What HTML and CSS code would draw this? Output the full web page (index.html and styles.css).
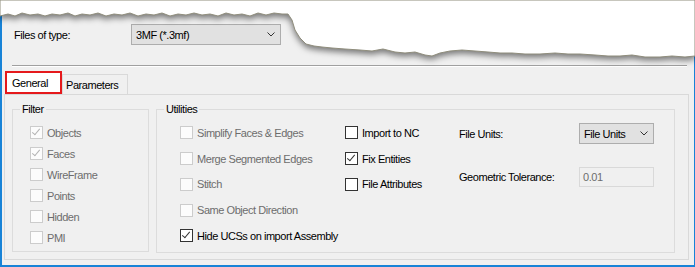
FILE: index.html
```html
<!DOCTYPE html>
<html lang="en">
<head>
    <meta charset="UTF-8">
    <title>Import Options</title>
    <link rel="stylesheet" href="styles.css">
</head>
<body>
    <div class="dialog">
        <div class="type-row">
            <span class="type-label">Files of type:</span>
            <div class="combo type-combo">
                <span>3MF (*.3mf)</span>
                <svg class="chevron" width="8" height="5" viewBox="0 0 8 5"><polyline points="0.5,0.5 4,4 7.5,0.5" fill="none" stroke="#333" stroke-width="1"/></svg>
            </div>
        </div>
        <div class="separator"></div>

        <div class="tabs">
            <div class="tab active">General</div>
            <div class="tab">Parameters</div>
        </div>

        <div class="panel">
            <div class="group filter">
                <span class="group-title">Filter</span>
                <div class="rows filter-rows">
                    <div class="check disabled checked"><span class="box"></span>Objects</div>
                    <div class="check disabled checked"><span class="box"></span>Faces</div>
                    <div class="check disabled"><span class="box"></span>WireFrame</div>
                    <div class="check disabled"><span class="box"></span>Points</div>
                    <div class="check disabled"><span class="box"></span>Hidden</div>
                    <div class="check disabled"><span class="box"></span>PMI</div>
                </div>
            </div>

            <div class="group utilities">
                <span class="group-title">Utilities</span>
                <div class="util-body">
                    <div class="rows util-col first-col">
                        <div class="check disabled"><span class="box"></span>Simplify Faces &amp; Edges</div>
                        <div class="check disabled"><span class="box"></span>Merge Segmented Edges</div>
                        <div class="check disabled"><span class="box"></span>Stitch</div>
                        <div class="check disabled"><span class="box"></span>Same Object Direction</div>
                        <div class="check checked"><span class="box"></span>Hide UCSs on import Assembly</div>
                    </div>
                    <div class="rows util-col second-col">
                        <div class="check"><span class="box"></span>Import to NC</div>
                        <div class="check checked"><span class="box"></span>Fix Entities</div>
                        <div class="check"><span class="box"></span>File Attributes</div>
                    </div>
                    <div class="settings">
                        <span class="setting-label">File Units:</span>
                        <div class="combo units-combo">
                            <span>File Units</span>
                            <svg class="chevron" width="8" height="5" viewBox="0 0 8 5"><polyline points="0.5,0.5 4,4 7.5,0.5" fill="none" stroke="#333" stroke-width="1"/></svg>
                        </div>
                        <span class="setting-label">Geometric Tolerance:</span>
                        <div class="text-field">0.01</div>
                    </div>
                </div>
            </div>
        </div>
    </div>

    <!-- torn top edge of the screenshot -->
    <svg class="torn" width="695" height="75" viewBox="0 0 695 75">
        <path class="torn-paper" d="M0,0 L695,0 L695,56 L685,57 L672,56 L660,57 L645,57 L632,55 L620,56 L608,56 L595,55 L580,54 L568,54 L555,53 L540,54 L525,54 L512,53 L500,53 L488,52 L475,51 L462,50 L450,51 L440,53 L432,56 L425,55 L415,52 L405,53 L395,52 L383,49 L372,51 L360,50 L345,49 L332,48 L322,47 L314,46 L306,44 L300,38 L295,30 L292,20 L288,14 L282,14 L274,13 L266,15 L258,13 L250,16 L242,14 L234,15 L226,13 L218,16 L210,14 L202,15 L194,13 L186,15 L178,14 L170,16 L162,13 L154,15 L146,14 L138,16 L130,13 L122,15 L114,14 L106,16 L98,13 L90,15 L82,14 L75,16 L68,13 L60,15 L52,14 L45,16 L38,14 L30,15 L22,13 L15,16 L8,14 L0,16 Z"/>
    </svg>
</body>
</html>
```

FILE: styles.css
```css
* { box-sizing: border-box; }
body {
    margin: 0;
    width: 695px;
    height: 267px;
    background: #ffffff;
    font-family: 'Liberation Sans', Arial, sans-serif;
    font-size: 11px;
    letter-spacing: -0.45px;
    color: #000;
    overflow: hidden;
    position: relative;
}
.dialog {
    width: 695px;
    height: 267px;
    background: #f0f0f0;
    border-left: 2px solid #1883d7;
    border-right: 1px solid #1883d7;
    border-bottom: 2px solid #1883d7;
}
.type-row {
    display: flex;
    align-items: center;
    padding: 24px 0 0 12px;
    height: 45px;
}
.type-label { width: 117px; }
.combo {
    display: flex;
    align-items: center;
    justify-content: space-between;
    background: #e1e1e1;
    border: 1px solid #adadad;
    padding: 0 5px 0 4px;
}
.type-combo { width: 150px; height: 21px; }
.chevron { display: block; }
.separator {
    margin: 20px 7px 0 10px;
    border-top: 1px solid #a0a0a0;
    border-bottom: 1px solid #ffffff;
}
.tabs {
    display: flex;
    align-items: flex-end;
    height: 23px;
    margin-top: 4px;
    padding-left: 3px;
}
.tab {
    width: 66px;
    height: 20px;
    padding: 0 3px;
    display: flex;
    align-items: center;
    border: 1px solid #d9d9d9;
    border-bottom: none;
    background: #f0f0f0;
}
.tab.active {
    height: 23px;
    padding: 0 5px;
    width: 57px;
    background: #ffffff;
    border: 2px solid #e5191c;
    position: relative;
    z-index: 1;
}
.panel {
    display: flex;
    gap: 7px;
    width: 685px;
    height: 166px;
    margin-left: 2px;
    border: 1px solid #d9d9d9;
    padding: 14px 0 0 7px;
}
.group {
    border: 1px solid #dcdcdc;
    height: 143px;
}
.filter { width: 137px; }
.utilities { width: 519px; height: 144px; }
.group-title {
    display: block;
    width: fit-content;
    margin: -7px 0 0 7px;
    padding: 0 2px;
    line-height: 13px;
    background: #f0f0f0;
}
.rows { display: flex; flex-direction: column; }
.filter-rows { padding: 6px 0 0 17px; }
.filter-rows .check { height: 21px; }
.util-body { display: flex; padding-top: 4px; }
.util-col .check { height: 25.75px; }
.first-col { width: 188px; padding-left: 23px; }
.second-col { width: 114px; }
.check {
    display: flex;
    align-items: center;
    gap: 4px;
    white-space: nowrap;
}
.box {
    width: 13px;
    height: 13px;
    border: 1px solid #333333;
    background: #ffffff;
    position: relative;
    flex: none;
}
.check.checked .box::after {
    content: "";
    position: absolute;
    left: 3px;
    top: 0px;
    width: 3px;
    height: 7px;
    border-right: 1.5px solid #333;
    border-bottom: 1.5px solid #333;
    transform: rotate(40deg);
}
.check.disabled { color: #6d6d6d; }
.check.disabled .box { border-color: #cccccc; background: #fcfcfc; }
.check.disabled.checked .box::after { border-color: #b3b3b3; }
.settings {
    display: grid;
    grid-template-columns: 120px 75px;
    grid-template-rows: 21px 20px;
    row-gap: 23px;
    align-items: center;
    padding-top: 3px;
}
.units-combo { height: 21px; padding: 0 5px 0 4px; }
.text-field {
    height: 20px;
    border: 1px solid #d9d9d9;
    background: #f0f0f0;
    color: #6d6d6d;
    padding: 3px 0 0 3px;
}
.torn {
    position: absolute;
    left: 0;
    top: 0;
}
.torn-paper {
    fill: #ffffff;
    stroke: #8f8d7c;
    stroke-width: 1;
    filter: drop-shadow(0 3px 3px rgba(0, 0, 0, 0.5));
}
```
